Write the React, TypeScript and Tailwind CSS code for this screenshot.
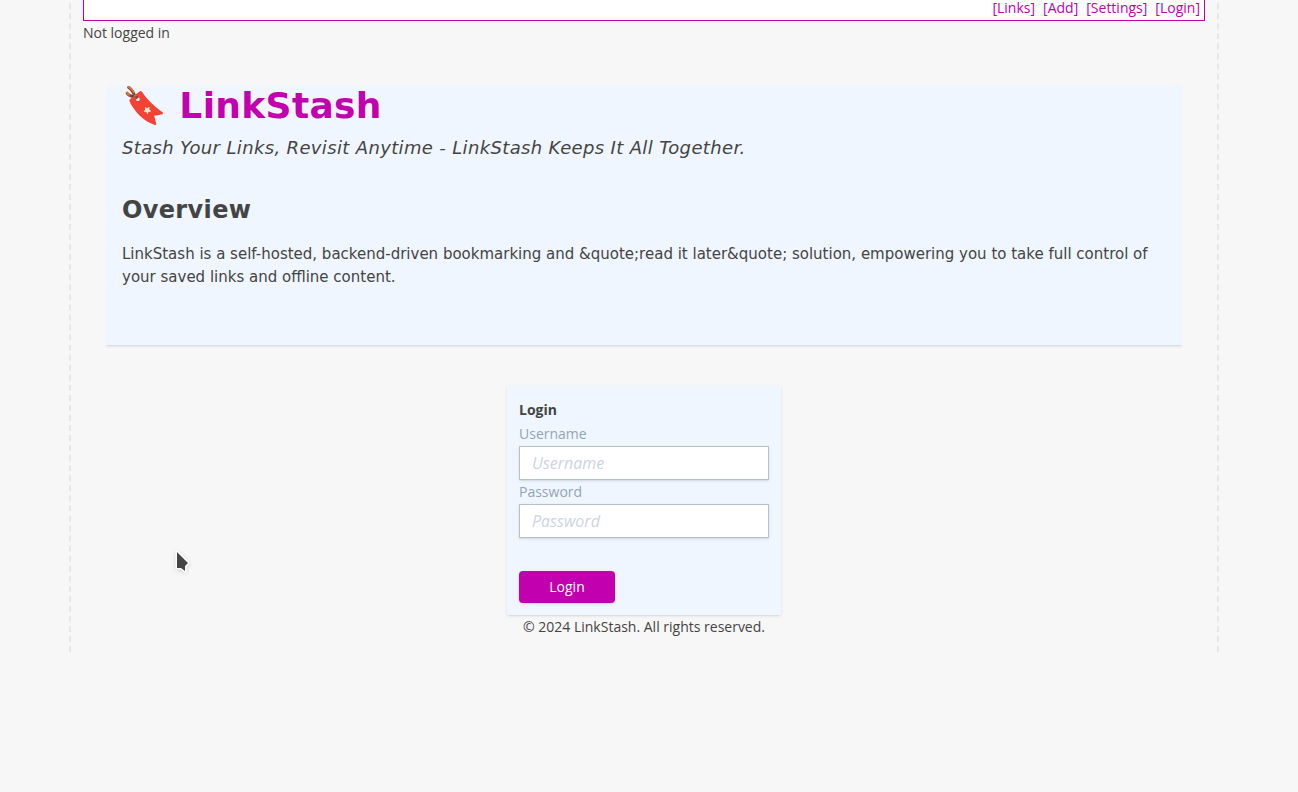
const navItems = ["Links", "Add", "Settings", "Login"];

function Header() {
  return (
    <header>
      <nav className="flex h-9 items-end justify-end gap-2 border border-[#c200b0] bg-white px-1 pb-1 leading-4">
        {navItems.map((item) => (
          <a key={item} href={`#${item.toLowerCase()}`} className="text-[#c200b0]">
            [{item}]
          </a>
        ))}
      </nav>
      <p className="pt-px">Not logged in</p>
    </header>
  );
}

function Hero() {
  return (
    <section className="mx-[23px] mt-[41px] border-b border-[#d8dde6] bg-[#eff6ff] px-4 pb-14 font-['DejaVu_Sans',sans-serif] tracking-wide shadow-[0_2px_2px_-1px_rgb(0_0_0/0.08)]">
      <h1 className="flex h-[41px] items-center gap-3 text-4xl font-bold text-[#c200b0]">
        <span>🔖</span>
        LinkStash
      </h1>
      <p className="mt-2 text-lg leading-7 italic">
        Stash Your Links, Revisit Anytime - LinkStash Keeps It All Together.
      </p>
      <h2 className="mt-8 text-2xl leading-8 font-bold">Overview</h2>
      <p className="mt-[17px] text-[15px] leading-[23px] tracking-normal">
        LinkStash is a self-hosted, backend-driven bookmarking and &amp;quote;read it later&amp;quote; solution,
        empowering you to take full control of your saved links and offline content.
      </p>
    </section>
  );
}

function Field({ id, label, type }: { id: string; label: string; type: string }) {
  return (
    <div className="flex flex-col">
      <label htmlFor={id} className="leading-6 text-[#94a3b8]">
        {label}
      </label>
      <input
        id={id}
        type={type}
        placeholder={label}
        className="h-[34px] w-full border border-[#b8c0cc] bg-white px-3 text-base shadow-sm placeholder:text-[#cbd5e1] placeholder:italic"
      />
    </div>
  );
}

function LoginForm() {
  return (
    <form className="mx-auto mt-10 w-[274px] bg-[#eff6ff] p-3 shadow-sm">
      <h2 className="leading-6 font-bold">Login</h2>
      <Field id="username" label="Username" type="text" />
      <Field id="password" label="Password" type="password" />
      <button type="button" className="mt-[33px] h-8 w-24 rounded bg-[#c200b0] text-white shadow-sm">
        Login
      </button>
    </form>
  );
}

function Pointer() {
  return (
    <svg
      className="absolute top-[549px] left-[174px] h-6 w-4 overflow-visible drop-shadow-sm"
      viewBox="0 0 16 24"
      aria-hidden="true"
    >
      <path
        d="M3 3 L14 14 L11 17 L11 22 L7 19 L3 19 Z"
        fill="#444"
        stroke="#fff"
        strokeWidth="3"
        paintOrder="stroke"
        strokeLinejoin="round"
      />
    </svg>
  );
}

export default function App() {
  return (
    <div className="relative min-h-screen overflow-hidden bg-[#f7f7f7] pr-2.5 font-['Open_Sans',sans-serif] text-sm leading-[22px] text-[#444]">
      <main className="mx-auto -mt-[27px] max-w-[1150px] border-x-2 border-dashed border-[#e5e7eb] px-3 pt-3 pb-3.5">
        <Header />
        <Hero />
        <LoginForm />
        <footer className="pt-px text-center">© 2024 LinkStash. All rights reserved.</footer>
      </main>
      <Pointer />
    </div>
  );
}
